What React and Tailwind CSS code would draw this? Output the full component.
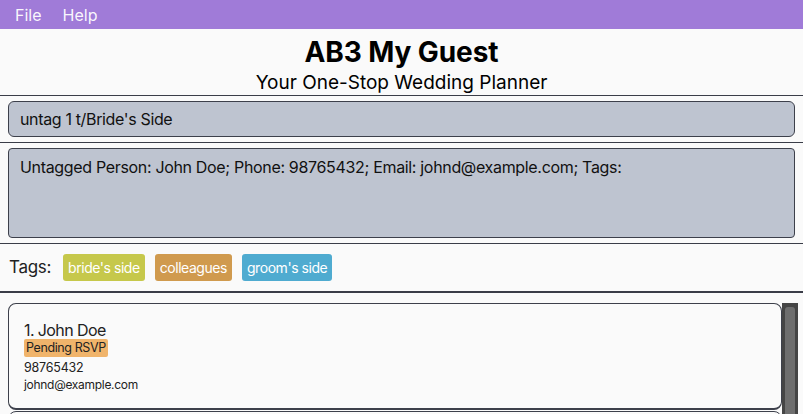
export default function App() {
  const tags = [
    { name: "bride's side", color: 'bg-[#c6c84b]' },
    { name: 'colleagues', color: 'bg-[#d09a4e]' },
    { name: "groom's side", color: 'bg-[#4fabd0]' },
  ];

  return (
    <div className="w-[803px] h-[414px] overflow-hidden bg-[#fafafa] flex flex-col font-['Inter',sans-serif] text-[#1a1a1a]">
      {/* Menu bar */}
      <div className="h-[29px] shrink-0 bg-[#a07bd8] flex items-center text-[16px] text-white/95">
        <span className="ml-[15px]">File</span>
        <span className="ml-[21px]">Help</span>
      </div>

      {/* Header */}
      <div className="h-[67px] shrink-0 flex flex-col items-center border-b border-[#3a3d48]">
        <h1 className="mt-[4px] text-[28px] leading-[38px] font-bold tracking-[-0.1px] text-black">AB3 My Guest</h1>
        <p className="text-[19px] leading-[24px] text-black">Your One-Stop Wedding Planner</p>
      </div>

      {/* Command box */}
      <div className="shrink-0 px-[8px] py-[5px] border-b border-[#3a3d48]">
        <div className="h-[36px] rounded-[6px] border border-[#3d404b] bg-[#bec4d0] flex items-center px-[11px] text-[16px] tracking-[-0.35px] text-[#111]">
          untag 1 t/Bride's Side
        </div>
      </div>

      {/* Result display */}
      <div className="shrink-0 px-[8px] py-[5px] border-b border-[#3a3d48]">
        <div className="h-[90px] rounded-[4px] border border-[#3d404b] bg-[#bec4d0] px-[11px] py-[8px] text-[16px] leading-[20px] tracking-[-0.33px] text-[#111]">
          Untagged Person: John Doe; Phone: 98765432; Email: johnd@example.com; Tags:
        </div>
      </div>

      {/* Tags bar */}
      <div className="h-[49px] shrink-0 flex items-center border-b-2 border-[#3a3d48] pl-[9px]">
        <span className="text-[17px] tracking-[-0.3px] text-[#222] mr-[12px]">Tags:</span>
        <div className="flex gap-[10px]">
          {tags.map(t => (
            <span key={t.name} className={`${t.color} h-[27px] px-[5px] rounded-[3px] flex items-center text-[14px] tracking-[-0.45px] text-white`}>
              {t.name}
            </span>
          ))}
        </div>
      </div>

      {/* Person list */}
      <div className="flex-1 flex pt-[10px] pl-[8px] pr-[5px]">
        <div className="flex-1 flex flex-col gap-[1px]">
          <div className="h-[107px] shrink-0 rounded-[8px] border border-[#3d404b] border-b-2 bg-[#fafafa] pl-[15px] pt-[17px]">
            <div className="text-[16px] leading-[18px] tracking-[-0.6px] text-[#222]">1. John Doe</div>
            <div className="w-fit bg-[#f0b46b] rounded-[2px] px-[2px] text-[12.5px] leading-[18px] tracking-[-0.4px] text-[#222]">Pending RSVP</div>
            <div className="mt-[2px] text-[12.5px] leading-[17px] tracking-[-0.2px] text-[#222]">98765432</div>
            <div className="text-[12px] leading-[17px] tracking-[-0.3px] text-[#222]">johnd@example.com</div>
          </div>
          <div className="h-[40px] shrink-0 rounded-[8px] border border-[#3d404b] bg-[#fafafa]" />
        </div>
        <div className="w-[16px] shrink-0 bg-[#454545] flex justify-center pt-[4px]">
          <div className="w-[10px] h-[200px] rounded-[3px] bg-[#6e6e6e]" />
        </div>
      </div>
    </div>
  );
}
